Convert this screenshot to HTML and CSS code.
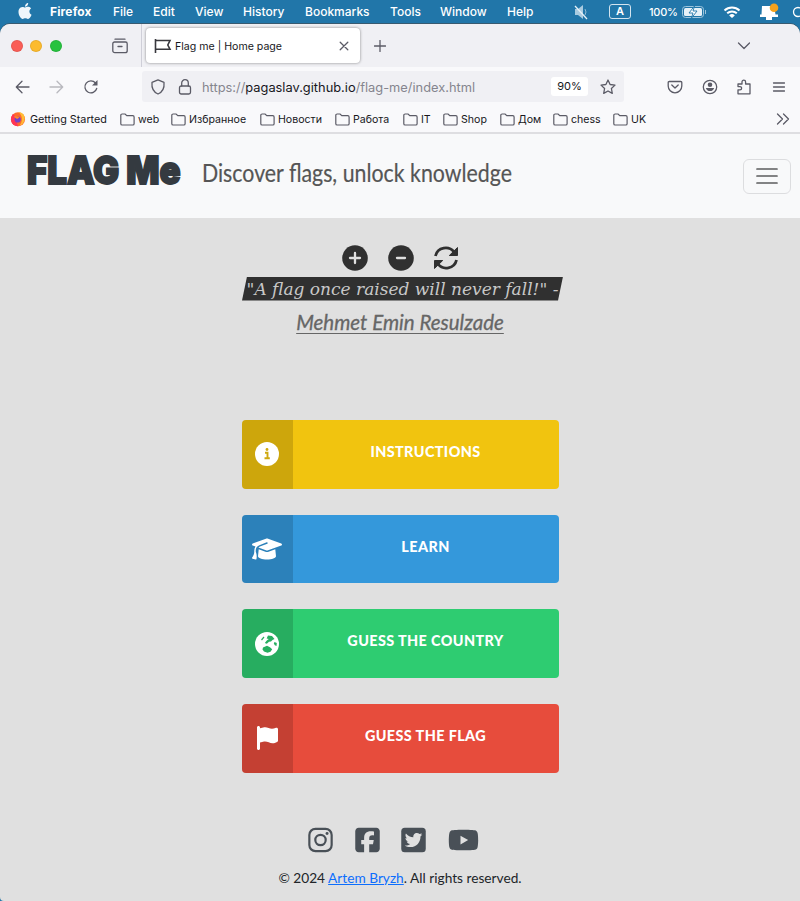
FILE: index.html
```html
<!DOCTYPE html>
<html lang="en">
<head>
<meta charset="utf-8">
<title>Flag me | Home page</title>
<link rel="stylesheet" href="styles.css">
</head>
<body>
<svg width="0" height="0" class="defs"><symbol id="folder" viewBox="0 0 15 13"><path d="M.8 2.300A1.300 1.300 0 0 1 2.100 1h3l1.700 1.700h6a1.300 1.300 0 0 1 1.300 1.300v6.700a1.300 1.300 0 0 1-1.300 1.300H2.100a1.300 1.300 0 0 1-1.300-1.300z" fill="none" stroke="#5b5b66" stroke-width="1.200"/></symbol></svg>
<div class="menubar">
  <svg class="apple" viewBox="0 0 24 24"><path d="M12.152 6.896c-.948 0-2.415-1.078-3.96-1.04-2.04.027-3.91 1.183-4.961 3.014-2.117 3.675-.546 9.103 1.519 12.09 1.013 1.454 2.208 3.09 3.792 3.039 1.52-.065 2.09-.987 3.935-.987 1.831 0 2.35.987 3.96.948 1.637-.026 2.676-1.48 3.676-2.948 1.156-1.688 1.636-3.325 1.662-3.415-.039-.013-3.182-1.221-3.22-4.857-.026-3.04 2.48-4.494 2.597-4.559-1.429-2.09-3.623-2.324-4.39-2.376-2-.156-3.675 1.09-4.61 1.09zM15.53 3.83c.843-1.012 1.4-2.427 1.245-3.83-1.207.052-2.662.805-3.532 1.818-.78.896-1.454 2.338-1.273 3.714 1.338.104 2.715-.688 3.559-1.701"/></svg>
  <nav class="menus"><b>Firefox</b><span>File</span><span>Edit</span><span>View</span><span>History</span><span>Bookmarks</span><span>Tools</span><span>Window</span><span>Help</span></nav>
  <div class="status">
    <svg class="mute" width="16" height="16" viewBox="0 0 16 16"><path d="M2 5h3l5-4v14l-5-4H2z" fill="#a9cbe0"/><path d="M12 5q2 3 0 6" fill="none" stroke="#8fbad5"/><path d="M2 2l12 13" stroke="#e6f1f8" stroke-width="1.3"/></svg>
    <span class="lang">A</span>
    <span class="pct">100%</span>
    <svg class="battery" width="25" height="12" viewBox="0 0 25 12"><rect x=".5" y=".5" width="21" height="11" rx="3" fill="none" stroke="#9cc4dc"/><rect x="2" y="2" width="18" height="8" rx="1.5" fill="#e6f1f8"/><path d="M12.500 0L7 7h4L9.500 12 15 5h-4z" fill="#fff" stroke="#2176a9" stroke-width=".9"/><path d="M23.500 4v4" stroke="#9cc4dc"/></svg>
    <svg class="wifi" width="18" height="14" viewBox="0 0 18 14"><path d="M1.500 5.500a11 11 0 0 1 15 0M4.200 8.300a7 7 0 0 1 9.600 0" fill="none" stroke="#fff" stroke-width="2"/><path d="M9 13L6.200 10.400a4 4 0 0 1 5.600 0z" fill="#fff"/></svg>
    <svg class="screen" width="20" height="18" viewBox="0 0 20 18"><path d="M3 3h12l1.500 8.500H19V14H1v-2.500h1.500zM7 14h6v3H7z" fill="#fff"/><circle cx="15" cy="4.700" r="4.300" fill="#f5a21c"/></svg>
    <svg class="search" width="8" height="14" viewBox="0 0 8 14"><circle cx="6" cy="7" r="4.500" fill="none" stroke="#fff" stroke-width="1.300"/></svg>
  </div>
</div>
<div class="window">
  <div class="tabs">
    <i class="dot red"></i><i class="dot yellow"></i><i class="dot green"></i>
    <svg class="firefox-view" width="16" height="16" viewBox="0 0 16 16"><path d="M3 1.200h10M2.500 4h11a1.700 1.700 0 0 1 1.700 1.700v7a2 2 0 0 1-2 2H2.800a2 2 0 0 1-2-2v-7A1.700 1.700 0 0 1 2.500 4zM6 8.500h4" class="line"/></svg>
    <div class="tab">
      <svg width="18" height="16" viewBox="0 0 18 16"><path d="M1.500 1v14M2 2.500h14L13.800 7l2.200 4.200H2" fill="none" stroke="#38383d" stroke-width="1.600"/></svg>
      <span>Flag me | Home page</span>
      <svg class="close" width="10" height="10" viewBox="0 0 10 10"><path d="M1.200 1.200l7.600 7.600M8.800 1.200L1.200 8.800" class="line"/></svg>
    </div>
    <svg class="plus" width="12" height="12" viewBox="0 0 12 12"><path d="M6 .5v11M.5 6h11" class="line"/></svg>
    <svg class="alltabs" width="14" height="8" viewBox="0 0 14 8"><path d="M1.500 1L7 6.500 12.500 1" class="line"/></svg>
  </div>
  <div class="toolbar">
    <svg class="back" width="15" height="14" viewBox="0 0 15 14"><path d="M14 7H1.500M7 1.300L1.300 7 7 12.700" class="line"/></svg>
    <svg class="forward" width="15" height="14" viewBox="0 0 15 14"><path d="M1 7h12.500M8 1.300L13.700 7 8 12.700" class="line"/></svg>
    <svg class="reload" width="16" height="16" viewBox="0 0 16 16"><path d="M13.700 9.500A6 6 0 1 1 12.500 4" class="line"/><path d="M14.500 1v5.500H9z" fill="#5b5b66"/></svg>
    <div class="urlbar">
      <svg width="16" height="16" viewBox="0 0 16 16"><path d="M8 .9l6 2.400c.5 5-1.200 9.700-6 11.700C3.200 13 1.500 8.300 2 3.300z" class="line"/></svg>
      <svg class="lock" width="14" height="16" viewBox="0 0 14 16"><rect x="1.500" y="7" width="11" height="8" rx="1.700" class="line"/><path d="M3.700 7V4a3.300 3.300 0 0 1 6.600 0v3" class="line"/></svg>
      <span class="url">https://<em>pagaslav.github.io</em>/flag-me/index.html</span>
      <span class="zoom">90%</span>
      <svg class="star" width="16" height="16" viewBox="0 0 16 16"><path d="M8 1l2.100 4.500 4.900.6-3.600 3.400.9 4.900L8 12l-4.300 2.400.9-4.900L1 6.100l4.900-.6z" class="line"/></svg>
    </div>
    <div class="actions">
      <svg width="16" height="16" viewBox="0 0 16 16"><path d="M2.200 2.500h11.600a1 1 0 0 1 1 1V7A6.800 6.800 0 0 1 1.200 7V3.500a1 1 0 0 1 1-1zM4.800 6L8 9l3.200-3" class="line"/></svg>
      <svg width="16" height="16" viewBox="0 0 16 16"><circle cx="8" cy="8" r="6.700" class="line"/><circle cx="8" cy="5.800" r="2.300" fill="#5b5b66"/><path d="M3.800 9h8.400a4.400 4.400 0 0 1-8.400 0z" fill="#5b5b66"/></svg>
      <svg width="16" height="16" viewBox="0 0 16 16"><path d="M2 5h4V3a1.800 1.800 0 0 1 3.600 0v2H14v9.800H2v-4h2a1.600 1.600 0 0 0 0-3.200H2z" class="line"/></svg>
      <svg width="16" height="16" viewBox="0 0 16 16"><path d="M2.500 4h11M2.500 8h11M2.500 12h11" class="line"/></svg>
    </div>
  </div>
  <div class="bookmarks">
    <span><svg class="fox" width="16" height="16" viewBox="0 0 16 16"><circle cx="8" cy="8.300" r="7" fill="#ff6a2c"/><path d="M8 15.300A7 7 0 0 1 1.500 5.500L3 3l2 2z" fill="#ff3555"/><path d="M8 1c5 0 7.500 4 6.500 8-.8 3.500-3 5-5 5.500C13 11 13 4 8 1z" fill="#ffbd35"/><circle cx="7.700" cy="8.500" r="3.100" fill="#7542c8"/><path d="M3.500 5.500q4-1 6 1L7 8z" fill="#ff8a25"/></svg>Getting Started</span>
    <span><svg width="15" height="13"><use href="#folder"/></svg>web</span><span><svg width="15" height="13"><use href="#folder"/></svg>Избранное</span><span><svg width="15" height="13"><use href="#folder"/></svg>Новости</span><span><svg width="15" height="13"><use href="#folder"/></svg>Работа</span><span><svg width="15" height="13"><use href="#folder"/></svg>IT</span><span><svg width="15" height="13"><use href="#folder"/></svg>Shop</span><span><svg width="15" height="13"><use href="#folder"/></svg>Дом</span><span><svg width="15" height="13"><use href="#folder"/></svg>chess</span><span><svg width="15" height="13"><use href="#folder"/></svg>UK</span>
    <svg class="more" width="14" height="12" viewBox="0 0 14 12"><path d="M1.500 1l5 5-5 5M7.500 1l5 5-5 5" class="line"/></svg>
  </div>
  <header class="site-header">
    <a class="brand">FLAG Me</a>
    <p class="tagline">Discover flags, unlock knowledge</p>
    <button class="toggler"><svg width="22" height="18" viewBox="0 0 22 18"><path d="M1 2h20M1 9h20M1 16h20" stroke="#5b5c5e" stroke-width="1.700" stroke-linecap="round"/></svg></button>
  </header>
  <main>
    <div class="controls">
      <svg width="26" height="26" viewBox="0 0 26 26"><circle cx="13" cy="13" r="12.800" fill="#303030"/><path d="M13 8v10M8 13h10" stroke="#e0e0e0" stroke-width="2.300" stroke-linecap="round"/></svg>
      <svg width="26" height="26" viewBox="0 0 26 26"><circle cx="13" cy="13" r="12.800" fill="#303030"/><path d="M9 13h8" stroke="#e0e0e0" stroke-width="2.300" stroke-linecap="round"/></svg>
      <svg width="26" height="26" viewBox="0 0 26 26"><path d="M2.500 11C4.500 2 16 .5 21 7M23.500 15C21.500 24 10 25.500 5 19" fill="none" stroke="#303030" stroke-width="2.800"/><path d="M24.500 2.500v8h-8.200zM1.500 23.500v-8h8.200z" fill="#303030" stroke="#303030" stroke-width="1" stroke-linejoin="round"/></svg>
    </div>
    <div class="quote"><span>"A flag once raised will never fall!" -</span></div>
    <div class="author"><a>Mehmet Emin Resulzade</a></div>
    <nav class="choices">
      <a class="choice sun"><i><svg width="24" height="24" viewBox="0 0 24 24"><circle cx="12" cy="12" r="12" fill="#fff"/><path d="M10 10.700h2.500v5M9.500 16.200h5.300" fill="none" stroke="#cea80f" stroke-width="1.900"/><circle cx="12" cy="7.500" r="1.400" fill="#cea80f"/></svg></i><span>INSTRUCTIONS</span></a>
      <a class="choice sky"><i><svg width="30" height="24" viewBox="0 0 640 512" fill="#fff"><path d="M320 32c-8.100 0-16.100 1.400-23.700 4.100L15.800 137.400C6.300 140.900 0 149.900 0 160s6.300 19.100 15.800 22.600l57.900 20.900C57.300 229.300 48 259.800 48 291.900v28.100c0 28.400-10.800 57.700-22.300 80.800c-6.500 13-13.900 25.800-22.500 37.600C0 442.700-.9 448.300 .9 453.400s6 8.900 11.200 10.200l64 16c4.200 1.100 8.700 .3 12.400-2s6.300-6.100 7.100-10.400c8.600-42.800 4.300-81.200-2.100-108.700C90.300 344.300 86 329.800 80 316.500V291.900c0-30.200 10.200-58.700 27.900-81.500c12.900-15.500 29.600-28 49.200-35.700l157-61.700c8.200-3.200 17.500 .8 20.700 9s-.8 17.500-9 20.700l-157 61.700c-12.400 4.900-23.300 12.400-32.200 21.600l159.600 57.600c7.600 2.700 15.600 4.100 23.700 4.100s16.100-1.400 23.700-4.100L624.200 182.600c9.500-3.400 15.800-12.500 15.800-22.600s-6.300-19.100-15.800-22.600L343.700 36.100C336.100 33.400 328.100 32 320 32zM128 408c0 35.300 86 72 192 72s192-36.700 192-72L496.700 262.600 354.500 314c-11.100 4-22.800 6-34.500 6s-23.500-2-34.500-6L143.300 262.600 128 408z"/></svg></i><span>LEARN</span></a>
      <a class="choice leaf"><i><svg width="24" height="24" viewBox="0 0 24 24"><circle cx="12" cy="12" r="12" fill="#fff"/><path d="M13 3.500l4 .5 2.500 3-2 1-1.500 1.500-2 .2-2.200 2-2-.7 2-2.500 2-1.500-2.200-.5zM19.500 10l2.300 1-.3 3-1.700-.8-1-1.700zM8 15.500l4-1.800 3 1.500 2.200 2-1.700 2.500-3 1-3.500-1.200-1.500-2z" fill="#27ae60"/><path d="M6.500 8l2.500-3" stroke="#27ae60" stroke-width="1.200"/></svg></i><span>GUESS THE COUNTRY</span></a>
      <a class="choice rose"><i><svg width="21" height="24" viewBox="0 0 448 512" fill="#fff"><path d="M64 32C64 14.300 49.700 0 32 0S0 14.300 0 32V64 368 480c0 17.700 14.300 32 32 32s32-14.300 32-32V352l64.300-16.100c41.100-10.300 84.600-5.500 122.500 13.400c44.200 22.100 95.500 24.800 141.700 7.400l34.700-13c12.500-4.700 20.800-16.600 20.800-30V66.100c0-23-24.200-38-44.800-27.700l-9.600 4.800c-46.300 23.200-100.800 23.200-147.100 0c-35.100-17.600-75.400-22-113.500-12.500L64 48V32z"/></svg></i><span>GUESS THE FLAG</span></a>
    </nav>
    <footer>
      <div class="social">
        <svg width="25" height="28" viewBox="0 0 448 512"><rect x="20" y="52" width="408" height="408" rx="112" fill="none" stroke="#495057" stroke-width="40"/><circle cx="224" cy="256" r="95" fill="none" stroke="#495057" stroke-width="40"/><circle cx="344" cy="136" r="27"/></svg>
        <svg width="25" height="28" viewBox="0 0 448 512"><path d="M64 32C28.700 32 0 60.700 0 96V416c0 35.300 28.700 64 64 64h98.200V334.200H109.400V256h52.800V222.300c0-87.100 39.400-127.500 125-127.500c16.200 0 44.200 3.200 55.700 6.400V172c-6-.6-16.500-1-29.600-1c-42 0-58.200 15.900-58.200 57.200V256h83.600l-14.400 78.200H255V480H384c35.300 0 64-28.700 64-64V96c0-35.300-28.700-64-64-64H64z"/></svg>
        <svg width="25" height="28" viewBox="0 0 448 512"><rect y="32" width="448" height="448" rx="64"/><path fill="#e0e0e0" d="M351.300 199.300c0 86.700-66 186.600-186.600 186.600c-37.200 0-71.700-10.800-100.700-29.400c5.300 .6 10.400 .8 15.800 .8c30.700 0 58.900-10.400 81.400-28c-28.800-.6-53-19.500-61.300-45.500c10.100 1.500 19.200 1.500 29.600-1.200c-30-6.100-52.500-32.500-52.500-64.400v-.8c8.700 4.900 18.900 7.900 29.600 8.300c-9-6-16.400-14.100-21.500-23.600s-7.800-20.200-7.700-31c0-12.200 3.200-23.400 8.900-33.100c32.300 39.800 80.800 65.800 135.200 68.600c-9.300-44.500 24-80.600 64-80.600c18.900 0 35.900 7.900 47.900 20.700c14.800-2.800 29-8.300 41.600-15.800c-4.900 15.200-15.200 28-28.800 36.100c13.200-1.400 26-5.100 37.800-10.200c-8.900 13.100-20.100 24.700-32.900 34c.2 2.800 .2 5.700 .2 8.500z"/></svg>
        <svg width="31" height="28" viewBox="0 0 576 512"><path d="M549.655 124.083c-6.281-23.650-24.787-42.276-48.284-48.597C458.781 64 288 64 288 64S117.220 64 74.629 75.486c-23.497 6.322-42.003 24.947-48.284 48.597-11.412 42.867-11.412 132.305-11.412 132.305s0 89.438 11.412 132.305c6.281 23.650 24.787 41.500 48.284 47.821C117.220 448 288 448 288 448s170.780 0 213.371-11.486c23.497-6.321 42.003-24.171 48.284-47.821 11.412-42.867 11.412-132.305 11.412-132.305s0-89.438-11.412-132.305zm-317.510 213.508V175.185l142.739 81.205-142.739 81.201z"/></svg>
      </div>
      <p>© 2024 <a>Artem Bryzh</a>. All rights reserved.</p>
    </footer>
  </main>
</div>
</body>
</html>
```
FILE: styles.css
```css
* { box-sizing: border-box; }
html { background: #2176a9; }
body { margin: 0; width: 800px; height: 901px; overflow: hidden; background: #2176a9; font-family: Inter, "Noto Sans", sans-serif; color: #17171c; white-space: nowrap; }
svg { display: block; flex: none; }
p { margin: 0; }
.line { fill: none; stroke: #5b5b66; stroke-width: 1.3; stroke-linecap: round; stroke-linejoin: round; }

.menubar { height: 24px; display: flex; align-items: center; padding-left: 17px; color: #fff; font-size: 12px; font-weight: 500; }
.apple { width: 16px; height: 16px; fill: #eef6fb; margin-right: 17px; margin-top: -2px; }
.menus { display: grid; grid-template-columns: 43px 20px 22px 28px 42px 65px 30px 47px 26px; column-gap: 20px; line-height: 22px; margin-top: -1px; }
.menus b { font-weight: 700; letter-spacing: .15px; }
.status { display: flex; align-items: center; margin-left: 40px; margin-top: -1px; }
.lang { width: 22px; height: 15px; margin-left: 20px; border: 1px solid #d3e4ef; border-radius: 3px; font-size: 11px; line-height: 13px; text-align: center; font-weight: 600; }
.pct { width: 28px; margin-left: 18px; font-size: 11px; letter-spacing: -.25px; }
.battery { margin-left: 5px; }
.wifi { margin-left: 16px; }
.screen { margin-left: 18px; }
.search { margin-left: 13px; }

.window { height: 877px; background: #e0e0e0; border-radius: 10px 10px 0 4px; overflow: hidden; box-shadow: 0 -1px 0 #385a70; }
.tabs { height: 43px; background: #f0f0f4; display: flex; align-items: center; padding-left: 11px; }
.dot { width: 12px; height: 12px; border-radius: 50%; margin-right: 7.300px; border: 1px solid rgba(0,0,0,.08); }
.red { background: #fa5e57; }
.yellow { background: #fcbb2e; }
.green { background: #27c23f; }
.firefox-view { margin-left: 43.500px; margin-right: 13.600px; }
.tab { height: 35px; width: 214px; margin-left: 4px; padding: 0 11px 0 8px; background: #fff; border-radius: 4px; box-shadow: 0 0 3px rgba(0,0,0,.45); display: flex; align-items: center; font-size: 10.600px; position: relative; }
.tab::before { content: ""; position: absolute; left: -5px; top: -4px; height: 43px; border-left: 1px solid #cfcfd8; }
.tab span { margin-left: 3px; padding-top: 2px; }
.tab .close { margin-left: auto; }
.plus { margin-left: 14px; }
.alltabs { margin-left: 351px; }

.toolbar { height: 39px; background: #f9f9fb; display: flex; align-items: center; padding-left: 15px; }
.forward { margin-left: 19px; opacity: .4; }
.reload { margin-left: 19px; }
.urlbar { height: 31px; width: 482px; margin-left: 43px; padding: 0 8px; background: #f0f0f4; border-radius: 3px; display: flex; align-items: center; }
.lock { margin-left: 12px; }
.url { margin-left: 10px; width: 350px; font-size: 12.850px; padding-top: 1px; color: #85858e; }
.url em { font-style: normal; color: #17171c; }
.zoom { width: 37px; height: 19px; background: #fff; border-radius: 3px; font-size: 11px; line-height: 19px; text-align: center; }
.star { margin-left: 12px; }
.actions { display: flex; gap: 18.700px; margin-left: 43px; }

.bookmarks { height: 28px; background: #f9f9fb; border-bottom: 2px solid #dedee1; display: grid; grid-template-columns: 110px 51px 89px 75px 68px 40px 57px 53px 60px 163px 14px; padding-left: 10px; align-items: center; font-size: 10.600px; }
.bookmarks span { display: flex; align-items: center; gap: 3px; }
.bookmarks span:first-child { gap: 4px; font-size: 10.800px; }

.site-header { height: 84px; background: #f8f9fa; display: flex; align-items: center; padding-left: 27px; }
.brand { width: 154px; height: 44px; font: 900 39px/44px Inter, sans-serif; color: #343a40; -webkit-text-stroke: 1.800px #343a40; transform: translateY(-6px) scaleX(.893); transform-origin: 0 50%; }
.tagline { width: 310px; margin-left: 21px; font: 25px/36px Lato, sans-serif; color: #555; -webkit-text-stroke: .2px #555; transform: translateY(-4px) scaleX(.853); transform-origin: 0 50%; }
.toggler { width: 48px; height: 35px; margin-left: 231px; background: none; border: 1px solid #dcdddf; border-radius: 6px; display: flex; align-items: center; justify-content: center; padding: 0; }

main { height: 683px; display: flex; flex-direction: column; align-items: center; padding-top: 26.500px; font-family: Lato, sans-serif; }
.controls { display: flex; gap: 19.700px; height: 32px; align-items: flex-start; margin-left: 1px; }
.quote { width: 321px; height: 24px; margin-left: 5px; background: #303030; clip-path: polygon(5px 0, 100% 0, 316px 100%, 0 100%); text-align: center; color: #c8c8c8; font: italic 17px/25px "DejaVu Serif", serif; }
.author { margin-top: 5px; font: italic 20.500px/32px Lato, sans-serif; color: #666; }
.author a { text-decoration: underline; text-decoration-thickness: 1px; text-underline-offset: 3px; -webkit-text-stroke: .3px #666; }
.choices { margin-top: 82.500px; display: grid; gap: 26px; }
.choice { width: 317px; height: 68.700px; display: flex; border-radius: 4px; overflow: hidden; color: #fff; font-size: 14.400px; font-weight: 900; }
.choice i { width: 51px; background: rgba(0,0,0,.15); display: flex; align-items: center; justify-content: center; }
.choice span { flex: 1; text-align: center; line-height: 63px; letter-spacing: .4px; }
.sun { background: #f1c40f; }
.sky { background: #3498db; }
.leaf { background: #2ecc71; }
.rose { background: #e74c3c; }
footer { margin-top: 53px; display: flex; flex-direction: column; align-items: center; font-size: 13.700px; line-height: 22px; color: #212529; }
.social { display: flex; gap: 21.500px; fill: #495057; margin-right: 13px; }
footer p { margin-top: 13px; }
footer a { color: #0d6efd; text-decoration: underline; }
.defs { position: absolute; }
```
